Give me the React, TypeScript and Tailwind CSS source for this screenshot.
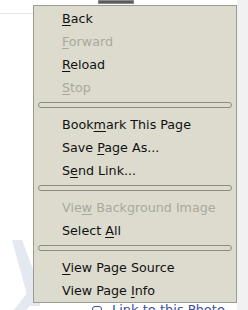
import React from "react";

type Item = { label: string; key: number; disabled?: boolean } | "sep";

const items: Item[] = [
  { label: "Back", key: 0 },
  { label: "Forward", key: 0, disabled: true },
  { label: "Reload", key: 0 },
  { label: "Stop", key: 0, disabled: true },
  "sep",
  { label: "Bookmark This Page", key: 4 },
  { label: "Save Page As...", key: 5 },
  { label: "Send Link...", key: 1 },
  "sep",
  { label: "View Background Image", key: 3, disabled: true },
  { label: "Select All", key: 7 },
  "sep",
  { label: "View Page Source", key: 0 },
  { label: "View Page Info", key: 10 },
];

function Label({ label, k }: { label: string; k: number }) {
  return (
    <span>
      {label.slice(0, k)}
      <span className="underline underline-offset-[2px] decoration-[1px]">{label[k]}</span>
      {label.slice(k + 1)}
    </span>
  );
}

export default function App() {
  return (
    <div className="relative flex h-[310px] w-[248px] overflow-hidden bg-white font-['DejaVu_Sans',sans-serif]">
      {/* page behind the menu */}
      <div className="flex flex-1 flex-col">
        <div className="ml-[98px] h-[4px] w-[36px] border border-[#8a8a8a] bg-[#5a5a5a]" />
        <div className="mt-[9px] h-px w-[40px] bg-[#e6e6e6]" />
        <div className="mt-auto flex items-end gap-[52px]">
          <svg width="40" height="74" viewBox="0 0 40 74">
            <polygon points="12,4 22,4 40,52 40,70 30,70" fill="#e4e8f1" />
            <polygon points="40,40 40,58 26,74 14,74" fill="#e4e8f1" />
          </svg>
          <div className="-mb-[9px] flex items-center gap-[10px] text-[13px] text-[#3b4fa0]">
            <span className="h-[6px] w-[10px] rounded-full border border-[#3b4fa0]" />
            <span>Link to this Photo</span>
          </div>
        </div>
      </div>
      <div className="w-[11px] bg-[#f1f1f1]" />

      {/* context menu */}
      <div className="absolute left-[33px] top-[5px] w-[204px] border border-[#9c9b92] bg-[#dcdbce] pt-[1px] text-[12.7px] leading-none">
        {items.map((it, i) =>
          it === "sep" ? (
            <div key={i} className="h-[14px] px-[4px] pt-[3px]">
              <div className="h-[6px] rounded-[3px] border border-[#8c8b80]" />
            </div>
          ) : (
            <div
              key={i}
              className={`flex h-[23px] items-center pl-[28px] pt-[2px] ${it.disabled ? "text-[#a9a89e]" : "text-[#111]"}`}
            >
              <Label label={it.label} k={it.key} />
            </div>
          )
        )}
      </div>
    </div>
  );
}
